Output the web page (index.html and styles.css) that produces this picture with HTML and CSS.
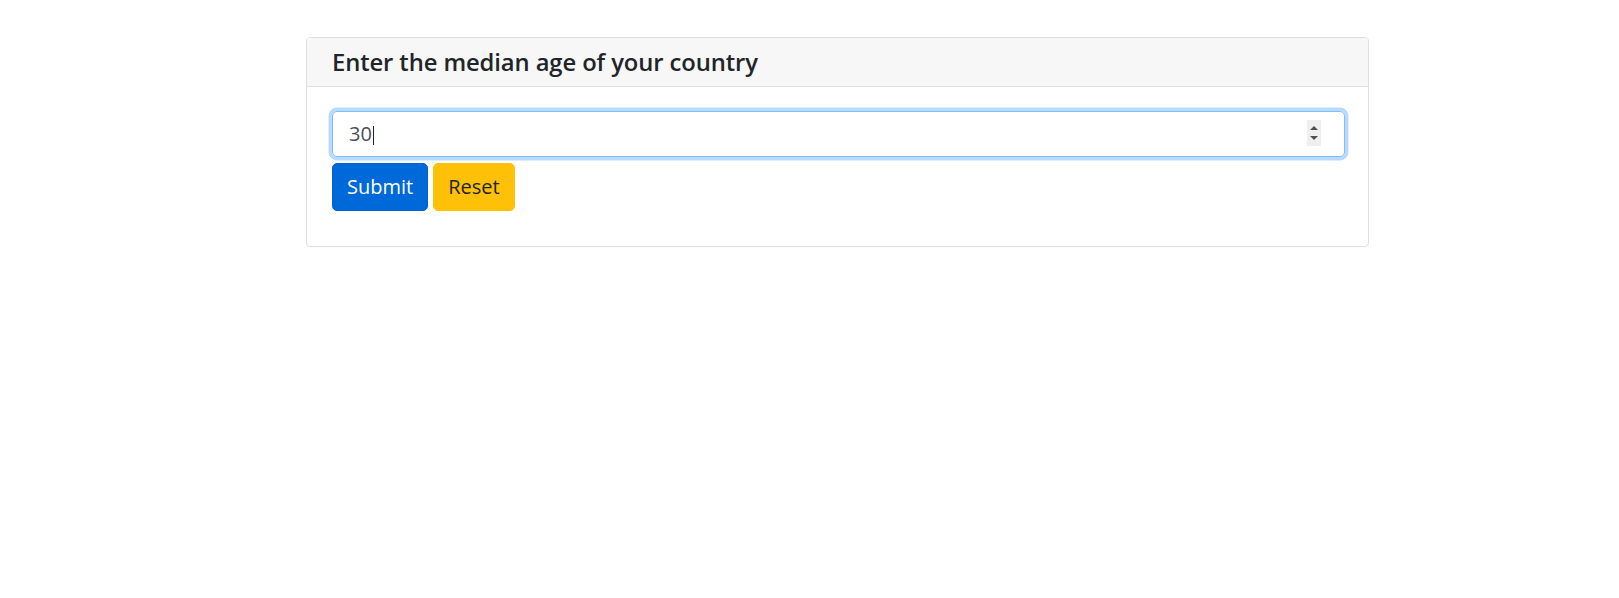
FILE: index.html
```html
<!DOCTYPE html>
<html lang="en">
<head>
<meta charset="utf-8">
<title>Median age</title>
<link rel="stylesheet" href="styles.css">
</head>
<body>
<div class="card">
  <div class="card-header"><h4 class="title">Enter the median age of your country</h4></div>
  <div class="card-body">
    <form class="age-form">
      <div class="form-control">
        <span class="value">30</span><span class="caret"></span>
        <span class="spinner">
          <svg width="14" height="26" viewBox="0 0 14 26">
            <path d="M3 10 L7 6 L11 10 Z" fill="#505050"/>
            <path d="M3 16 L7 20 L11 16 Z" fill="#505050"/>
          </svg>
        </span>
      </div>
      <div class="actions">
        <button type="button" class="btn btn-primary">Submit</button>
        <button type="button" class="btn btn-warning">Reset</button>
      </div>
    </form>
  </div>
</div>
</body>
</html>
```

FILE: styles.css
```css
html, body {
  margin: 0;
  padding: 0;
  background: #ffffff;
}
body {
  font-family: "Open Sans", "Noto Sans", sans-serif;
  color: #212529;
}
.card {
  margin: 37px 0 0 306px;
  width: 1063px;
  box-sizing: border-box;
  border: 1px solid #dfdfdf;
  border-radius: 4px;
  background: #fff;
}
.card-header {
  background: #f7f7f7;
  border-bottom: 1px solid #dfdfdf;
  border-radius: 3px 3px 0 0;
  height: 48px;
  box-sizing: content-box;
  padding: 0 0 0 25px;
  display: flex;
  align-items: center;
}
.title {
  margin: 0;
  font-size: 23.8px;
  font-weight: 600;
  line-height: 1.2;
  letter-spacing: -0.1px;
}
.card-body {
  padding: 24px 23px 35px 25px;
}
.form-control {
  position: relative;
  display: flex;
  align-items: center;
  height: 46px;
  box-sizing: border-box;
  border: 1px solid #80bdff;
  border-radius: 5px;
  box-shadow: 0 0 0 3.5px rgba(0, 123, 255, 0.28);
  padding: 0 16px;
  font-size: 20px;
  color: #495057;
}
.value {
  line-height: 1;
}
.caret {
  display: inline-block;
  width: 1px;
  height: 19px;
  background: #222;
  margin-left: 1px;
  margin-top: 2px;
}
.spinner {
  position: absolute;
  right: 23px;
  top: 8px;
  width: 14px;
  height: 26px;
  background: #efefef;
  display: block;
}
.spinner svg {
  display: block;
}
.actions {
  display: flex;
  gap: 5px;
  margin-top: 6px;
}
.btn {
  font-family: inherit;
  font-size: 20px;
  line-height: 1.5;
  padding: 8px 14px 8px;
  border: 1px solid transparent;
  border-radius: 5px;
  cursor: pointer;
}
.btn-primary {
  background: #0069d9;
  border-color: #0062cc;
  color: #fff;
}
.btn-warning {
  background: #ffc107;
  border-color: #ffc107;
  color: #212529;
}
```
